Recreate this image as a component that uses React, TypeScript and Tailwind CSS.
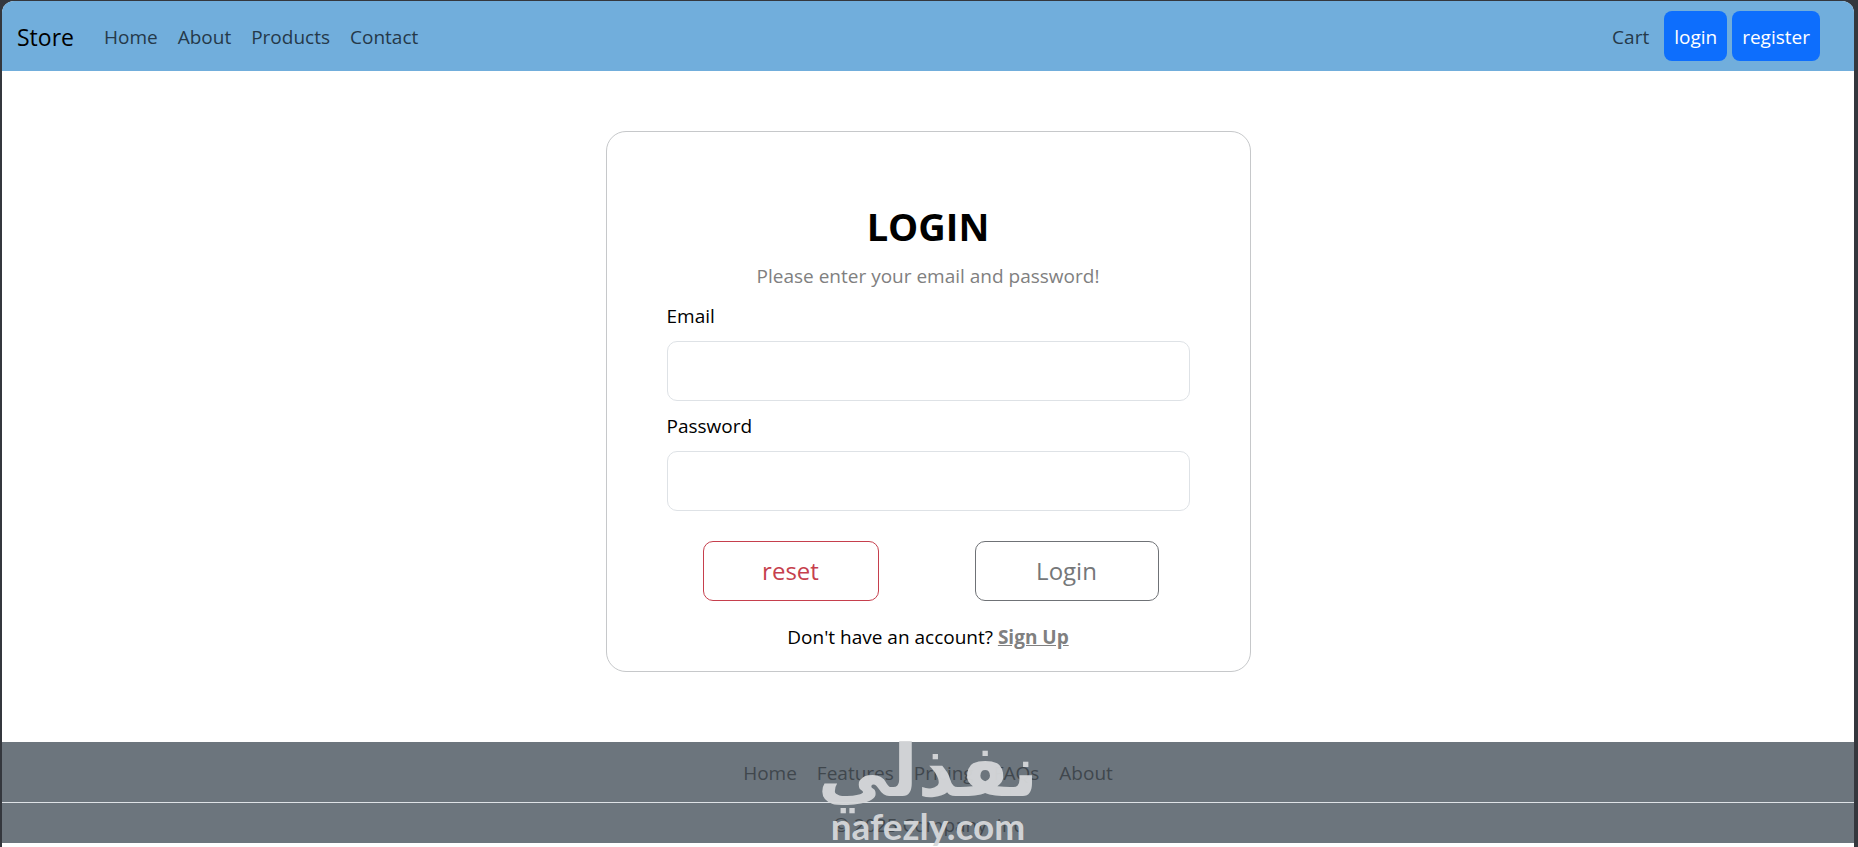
import React from "react";

const navLinks = ["Home", "About", "Products", "Contact"];
const footerLinks = ["Home", "Features", "Pricing", "FAQs", "About"];

function Navbar() {
  return (
    <nav className="flex h-[70px] items-center rounded-t-xl bg-[#71aedc] pr-[34px] pl-[15px]">
      <a href="#" className="mr-[30px] pt-[2px] text-[23px] leading-9 text-black">
        Store
      </a>
      <ul className="flex gap-5 pt-[2px]">
        {navLinks.map((label) => (
          <li key={label}>
            <a href="#" className="text-[#25394a]">
              {label}
            </a>
          </li>
        ))}
      </ul>
      <div className="ml-auto flex items-center gap-[5px]">
        <a href="#" className="mr-[10px] pt-[2px] text-[#25394a]">
          Cart
        </a>
        <button type="button" className="h-[50px] rounded-lg bg-[#0d6efd] px-[10px] pt-[2px] text-white">
          login
        </button>
        <button type="button" className="h-[50px] rounded-lg bg-[#0d6efd] px-[10px] pt-[2px] text-white">
          register
        </button>
      </div>
    </nav>
  );
}

type FieldProps = { id: string; label: string; type: string };

function Field({ id, label, type }: FieldProps) {
  return (
    <div className="mb-[10px]">
      <label htmlFor={id} className="mb-[10px] block leading-[30px] text-black">
        {label}
      </label>
      <input
        id={id}
        type={type}
        className="block h-[60px] w-full rounded-[10px] border border-[#dee2e6] bg-white px-5 text-2xl outline-none"
      />
    </div>
  );
}

function LoginCard() {
  return (
    <form className="flex w-full max-w-[645px] flex-col rounded-[20px] border border-[#c6c8ca] bg-white px-[60px] pt-[69px] pb-[19px]">
      <h2 className="mb-[10px] text-center text-[38px] leading-[50px] font-bold text-black">LOGIN</h2>
      <p className="mb-[10px] text-center leading-[30px] text-[#808080]">
        Please enter your email and password!
      </p>
      <Field id="email" label="Email" type="email" />
      <Field id="password" label="Password" type="password" />
      <div className="mt-5 flex justify-between pr-[31px] pl-[36px]">
        <button
          type="reset"
          className="h-[60px] w-[176px] rounded-[10px] border border-[#c63f4d] text-2xl text-[#c63f4d]"
        >
          reset
        </button>
        <button
          type="submit"
          className="h-[60px] w-[184px] rounded-[10px] border border-[#6f7276] text-2xl text-[#757779]"
        >
          Login
        </button>
      </div>
      <p className="mt-[21px] text-center leading-[30px] text-black">
        Don't have an account?{" "}
        <a href="#" className="font-bold text-[#808080] underline">
          Sign Up
        </a>
      </p>
    </form>
  );
}

function Footer() {
  return (
    <footer className="relative h-[101px] bg-[#6c757d] text-center">
      <ul className="flex h-[61px] items-center justify-center gap-5 border-b border-[#dee2e6] pt-[2px]">
        {footerLinks.map((label) => (
          <li key={label}>
            <a href="#" className="text-[#40474d]">
              {label}
            </a>
          </li>
        ))}
      </ul>
      <p className="pt-[7px] leading-[30px] text-[#40474d]">© 2025 Company, Inc</p>
      <Watermark />
    </footer>
  );
}

function Watermark() {
  return (
    <div className="pointer-events-none absolute inset-x-0 -top-2 flex flex-col items-center text-[#d6d8da] opacity-95">
      <span lang="ar" dir="rtl" className="font-['DejaVu_Sans',sans-serif] text-[72px] leading-[74px] font-bold">
        نفذلي
      </span>
      <span className="font-['Lato','DejaVu_Sans',sans-serif] text-[37px] leading-[36px] font-bold">nafezly.com</span>
    </div>
  );
}

export default function App() {
  return (
    <div className="min-h-screen bg-[#34373d] pt-px pr-[4px] pl-[2px] font-['Open_Sans','Noto_Sans',sans-serif] text-[19px] leading-[30px]">
      <div className="min-h-[846px] rounded-t-xl bg-white">
        <Navbar />
        <main className="flex justify-center pt-[60px] pb-[70px]">
          <LoginCard />
        </main>
        <Footer />
      </div>
    </div>
  );
}
